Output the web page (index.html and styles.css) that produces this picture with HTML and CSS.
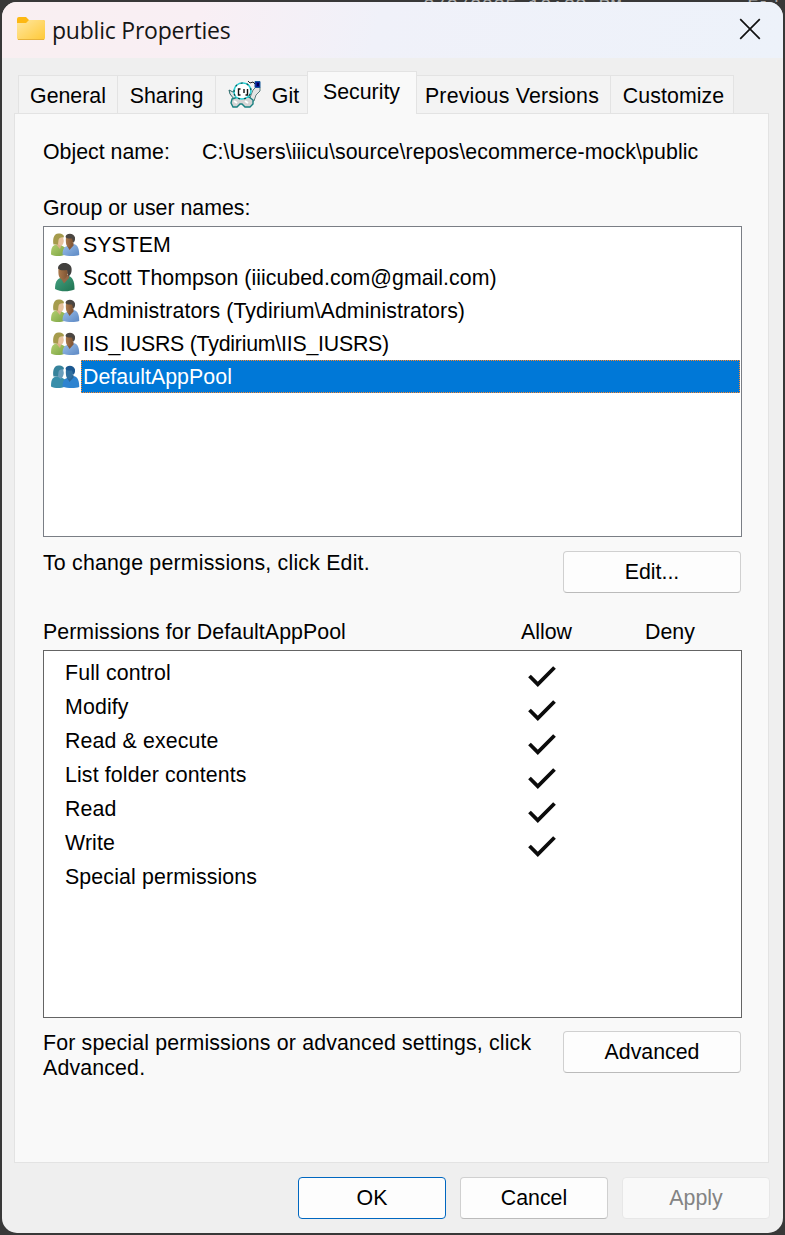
FILE: index.html
```
<!DOCTYPE html>
<html lang="en">
<head>
<meta charset="utf-8">
<title>public Properties</title>
<link rel="stylesheet" href="styles.css">
</head>
<body>
<svg class="defs" width="0" height="0" aria-hidden="true">
  <defs>
    <linearGradient id="folder" x1="0" y1="0" x2="1" y2="1"><stop offset="0" stop-color="#ffe7a0"/><stop offset="1" stop-color="#ffc937"/></linearGradient>
    <linearGradient id="green" x1="0" y1="0" x2="1" y2="1"><stop offset="0" stop-color="#b5d070"/><stop offset="1" stop-color="#7ba444"/></linearGradient>
    <linearGradient id="blue" x1="0" y1="0" x2="1" y2="1"><stop offset="0" stop-color="#9cc0ea"/><stop offset="1" stop-color="#5c88c4"/></linearGradient>
    <linearGradient id="teal" x1="0" y1="0" x2="1" y2="1"><stop offset="0" stop-color="#46a283"/><stop offset="1" stop-color="#1f7350"/></linearGradient>
    <linearGradient id="skin" x1="0" y1="0" x2="1" y2="0"><stop offset="0" stop-color="#a9784c"/><stop offset="1" stop-color="#7c5232"/></linearGradient>
    <symbol id="group" viewBox="0 0 30 26">
      <path d="M1 22.500c0-6 1-9 5-10l4 0 5 3 0 7c-4 2-10 2-14 0z" fill="url(#green)"/>
      <path d="M6.500 10h5v3l-1.500 4-3.500-4z" fill="#dbb18a"/>
      <path d="M8 4l5 .5.8 4.500c-.3 3-1.500 4.500-3 4.500-2 0-3.300-2-3.300-4.500z" fill="#e8c39f"/>
      <path d="M3.500 12.500C2.500 8 3.500 1.500 8.500 1.500c4 0 6 2 5.300 4-3-.5-4.800.5-5.300 2.500l-.5 4.500z" fill="#a59b4c"/>
      <path d="M12.500 22.500c0-5 1.500-7.500 4.500-8.500l6-2c5 .5 6.200 5 6.200 11-4 1.500-12 1.500-16.700-.5z" fill="url(#blue)"/>
      <path d="M18 11h5.500v2.500l-4 4.500-2-3.500z" fill="#85583a"/>
      <path d="M16 5h7v5c-.5 3-2 5-4.500 5-2.500-.5-3-5-2.500-10z" fill="url(#skin)"/>
      <path d="M15.500 5c.5-4.500 8.500-4.500 9.500.5.3 2.500-.5 4-1.500 5.500l-1.500-4.500c-3 0-5.500.2-6.500-1.500z" fill="#4b4642"/>
    </symbol>
    <symbol id="group-selected" viewBox="0 0 30 26">
      <path d="M1 22.500c0-6 1-9 5-10l4 0 5 3 0 7c-4 2-10 2-14 0z" fill="#388eaa"/>
      <path d="M8 4l5 .5.8 4.500c-.3 3-1.500 5-3 6l-4-3z" fill="#6a9dbb"/>
      <path d="M3.500 12.500C2.500 8 3.500 1.500 8.500 1.500c4 0 6 2 5.300 4-3-.5-4.800.5-5.300 2.500l-.5 4.500z" fill="#37839c"/>
      <path d="M12.500 22.500c0-5 1.500-7.500 4.500-8.500l6-2c5 .5 6.200 5 6.200 11-4 1.500-12 1.500-16.700-.5z" fill="#2d83d0"/>
      <path d="M18 11h5.500v2.500l-4 4.500-2-3.500z" fill="#2a6596"/>
      <path d="M16 5h7v5c-.5 3-2 5-4.500 5-2.500-.5-3-5-2.500-10z" fill="#32709f"/>
      <path d="M15.500 5c.5-4.500 8.500-4.500 9.500.5.3 2.500-.5 4-1.500 5.500l-1.500-4.500c-3 0-5.500.2-6.500-1.500z" fill="#1b5790"/>
    </symbol>
    <symbol id="user" viewBox="0 0 30 30">
      <path d="M5 27c0-7 2-10 6-11.500l6-2c6 1 7.500 6 7.500 14-6 2.500-14 2.500-19.500-.5z" fill="url(#teal)"/>
      <path d="M11 13h8v3l-5 5.500-3-5z" fill="#946747"/>
      <path d="M8.500 6h9l.5 5c-1 4-3 6.500-5.500 6.500-4-.5-4.500-6-4-11.500z" fill="url(#skin)"/>
      <path d="M8 6.500c0-7 12-7.500 13.500-.5.5 4-.5 6.500-3 8.500l-1.500-6.500c-4 .5-7 .5-9-1.500z" fill="#42403e"/>
    </symbol>
    <symbol id="check" viewBox="0 0 28 22"><path d="M1.500 10l8.300 8.300L26.500 1.500" fill="none" stroke="#0b0b0b" stroke-width="3.800"/></symbol>
  </defs>
</svg>
<div class="desktop">
<div class="behind"><span>2/9/2025 10:28 PM</span><span>Fil</span></div>
<main class="dialog">
  <header class="titlebar">
    <svg class="folder" width="28" height="24" viewBox="0 0 28 24"><path d="M0 2q0-2 2-2h7l3 3h14q2 0 2 2v5H0z" fill="#fdb813"/><path d="M0 6h9l3-3h14q2 0 2 2v16q0 2-2 2H2q-2 0-2-2z" fill="url(#folder)"/><path d="M1 22.500h26" stroke="#e7b23a"/></svg>
    <h1 class="title">public Properties</h1>
    <svg class="close" width="22" height="22" viewBox="0 0 22 22"><path d="M1.200 1.200l19.600 19.600M20.800 1.200L1.200 20.800" stroke="#111" stroke-width="1.700"/></svg>
  </header>
  <nav class="tabs">
    <div class="tab general">General</div>
    <div class="tab sharing">Sharing</div>
    <div class="tab git">
      <svg class="turtle" width="34" height="28" viewBox="0 0 34 28">
        <path d="M1 10l6 3 3 7-4-1-4-5z" fill="#e2e2e2" stroke="#2a6c6c"/>
        <path d="M21 21l2-6 2-5 3-3h4v4l-4 4-2 6z" fill="#e4e4e4" stroke="#5d7c7c"/>
        <path d="M4 19l6-2h11l4 3v4l-3 3h-5l-3-3h-2l-3 3H5l-2-4z" fill="#d4d4d4" stroke="#178080" stroke-width="1.400"/>
        <path d="M6 12c0-6 4-9 9-9s8 4 8 8-4 8-9 8-8-3-8-7z" fill="#fff" stroke="#28cfd4" stroke-width="1.600"/>
        <path d="M6 12c0-6 4-9 9-9s8 4 8 8-4 8-9 8-8-3-8-7z" fill="none" stroke="#0a4a4a" stroke-width="1.200" stroke-dasharray="2 4"/>
        <path d="M12.500 9h-2v6h2m3.500-6v4m3.500-4v6h-2" stroke="#111" stroke-width="1.400" fill="none"/>
        <path d="M6 21l3 2m8-2l3 2" stroke="#fff" stroke-width="2"/>
        <path d="M27 1.500h5v6h-5z" fill="#0a189a" stroke="#165b9a"/>
        <path d="M29 3h2v3h-2z" fill="#000050"/>
        <path d="M20 1l2 2 3-1 2 2" stroke="#222" fill="none"/>
      </svg>
      <span>Git</span>
    </div>
    <div class="tab security">Security</div>
    <div class="tab versions">Previous Versions</div>
    <div class="tab customize">Customize</div>
  </nav>
  <section class="panel">
    <div class="object"><span class="object-label">Object name:</span><span class="path">C:\Users\iiicu\source\repos\ecommerce-mock\public</span></div>
    <div class="names-label">Group or user names:</div>
    <ul class="names">
      <li><svg class="avatar"><use href="#group"/></svg><span>SYSTEM</span></li>
      <li><svg class="avatar single"><use href="#user"/></svg><span class="email">Scott Thompson (iiicubed.com@gmail.com)</span></li>
      <li><svg class="avatar"><use href="#group"/></svg><span class="admins">Administrators (Tydirium\Administrators)</span></li>
      <li><svg class="avatar"><use href="#group"/></svg><span class="iis">IIS_IUSRS (Tydirium\IIS_IUSRS)</span></li>
      <li class="selected"><svg class="avatar"><use href="#group-selected"/></svg><span>DefaultAppPool</span></li>
    </ul>
    <div class="edit-row"><span>To change permissions, click Edit.</span><button class="button">Edit...</button></div>
    <div class="perm-head"><span>Permissions for DefaultAppPool</span><span>Allow</span><span>Deny</span></div>
    <ul class="perms">
      <li><span>Full control</span><svg class="check"><use href="#check"/></svg></li>
      <li><span>Modify</span><svg class="check"><use href="#check"/></svg></li>
      <li><span>Read &amp; execute</span><svg class="check"><use href="#check"/></svg></li>
      <li><span>List folder contents</span><svg class="check"><use href="#check"/></svg></li>
      <li><span>Read</span><svg class="check"><use href="#check"/></svg></li>
      <li><span>Write</span><svg class="check"><use href="#check"/></svg></li>
      <li><span>Special permissions</span></li>
    </ul>
    <div class="advanced-row"><p>For special permissions or advanced settings, click<br>Advanced.</p><button class="button">Advanced</button></div>
  </section>
  <footer class="actions">
    <button class="button ok">OK</button><button class="button cancel">Cancel</button><button class="button apply" disabled>Apply</button>
  </footer>
</main>
</div>
</body>
</html>
```
FILE: styles.css
```
* { box-sizing: border-box; }
body { margin: 0; font: 21.33px/25px "Liberation Sans", Arial, sans-serif; color: #000; }
.defs { position: absolute; }
.desktop { width: 785px; height: 1235px; padding: 0 2px 2px; background: #383838; overflow: hidden; }
.behind { height: 2px; overflow: hidden; display: flex; justify-content: space-between; padding: 0 1px 0 421px; font: 19.5px/14px "Liberation Mono", monospace; color: #aaa; }
.dialog { width: 781px; height: 1231px; background: #efefef; border-radius: 15px; overflow: hidden; display: flex; flex-direction: column; }
.titlebar { height: 56px; flex: none; display: flex; padding: 15px 22px 0 15px; background: linear-gradient(105deg, #f9eff1 0%, #f9eff4 25%, #f0f1f9 48%, #edf2fa 100%); }
.folder { flex: none; }
.title { flex: 1; margin: -3px 0 0 7px; font: 400 23px/32px "Open Sans", sans-serif; letter-spacing: -.22px; color: #151515; white-space: nowrap; }
.close { margin-top: 1px; flex: none; }
.tabs { height: 55px; flex: none; display: flex; align-items: flex-end; padding-left: 16px; }
.tab { height: 38px; flex: none; display: flex; align-items: center; justify-content: center; border: 1px solid #e3e3e3; border-width: 1px 1px 0 0; background: #f3f3f3; padding-top: 3px; white-space: nowrap; }
.general { width: 100px; border-left-width: 1px; }
.sharing { width: 98px; }
.git { width: 91px; gap: 10px; padding-left: 4px; border-right: 0; }
.turtle { flex: none; margin-top: -5px; }
.security { width: 110px; height: 43px; margin-bottom: -1px; padding: 3px 1px 4px 0; background: #f9f9f9; border-left-width: 1px; z-index: 1; }
.versions { width: 194px; padding-right: 3px; letter-spacing: .2px; }
.customize { width: 123px; padding-left: 3px; letter-spacing: .1px; }
.panel { width: 755px; height: 1050px; flex: none; margin-left: 12px; padding: 26px 27px 0 28px; border: 1px solid #e3e3e3; background: #f9f9f9; }
.object { display: flex; height: 56px; }
.object-label { width: 159px; }
.path { letter-spacing: .09px; }
.names-label { height: 30px; }
.names, .perms { list-style: none; margin: 0; padding: 0; background: #fff; border: 1px solid #7a7e85; width: 699px; }
.names { height: 311px; padding: 1px 1px 0 6px; }
.names li { height: 33px; display: flex; }
.names span { flex: 1; padding: 5px 0 0 2px; line-height: 25px; white-space: nowrap; }
.names .email { letter-spacing: .03px; }
.names .admins { letter-spacing: .07px; }
.names .iis { letter-spacing: -.23px; }
.avatar { width: 30px; height: 26px; margin: 4px 1px 0 0; flex: none; }
.single { height: 30px; margin-top: 1px; }
.names .selected span {
  color: #fff;
  padding: 5px 0 0 2px;
  letter-spacing: .05px;
  background:
    repeating-linear-gradient(90deg, #ff8728 0 1px, #0078d7 1px 2px) 0 0 / 100% 1px no-repeat,
    repeating-linear-gradient(90deg, #ff8728 0 1px, #0078d7 1px 2px) 0 100% / 100% 1px no-repeat,
    repeating-linear-gradient(180deg, #ff8728 0 1px, #0078d7 1px 2px) 0 0 / 1px 100% no-repeat,
    repeating-linear-gradient(180deg, #ff8728 0 1px, #0078d7 1px 2px) 100% 0 / 1px 100% no-repeat,
    #0078d7;
}
.edit-row, .advanced-row { display: flex; justify-content: space-between; }
.edit-row { height: 83px; padding-top: 14px; }
.edit-row span { letter-spacing: .2px; }
.button { appearance: none; width: 178px; height: 42px; flex: none; padding: 0; font: inherit; color: #000; background: #fdfdfd; border: 1px solid #d0d0d0; border-bottom-color: #bbb; border-radius: 4px; }
.perm-head { display: grid; grid-template-columns: 478px 124px 1fr; height: 30px; }
.perm-head span:first-child { letter-spacing: .06px; }
.perms { height: 368px; border-color: #646464; padding: 6px 0 0 21px; letter-spacing: .13px; }
.perms li { height: 34px; display: flex; }
.perms span { width: 463px; padding-top: 4px; }
.check { width: 28px; height: 22px; margin-top: 9px; }
.advanced-row { padding-top: 13px; }
.advanced-row p { margin: 0; white-space: nowrap; letter-spacing: .16px; }
.actions { display: flex; gap: 14px; justify-content: flex-end; padding: 14px 13px 0 0; }
.actions .button { width: 148px; }
.actions .ok { border-color: #0067c0; }
.actions .apply { color: #838383; background: #f9f9f9; border-color: #e7e7e7; }
```
